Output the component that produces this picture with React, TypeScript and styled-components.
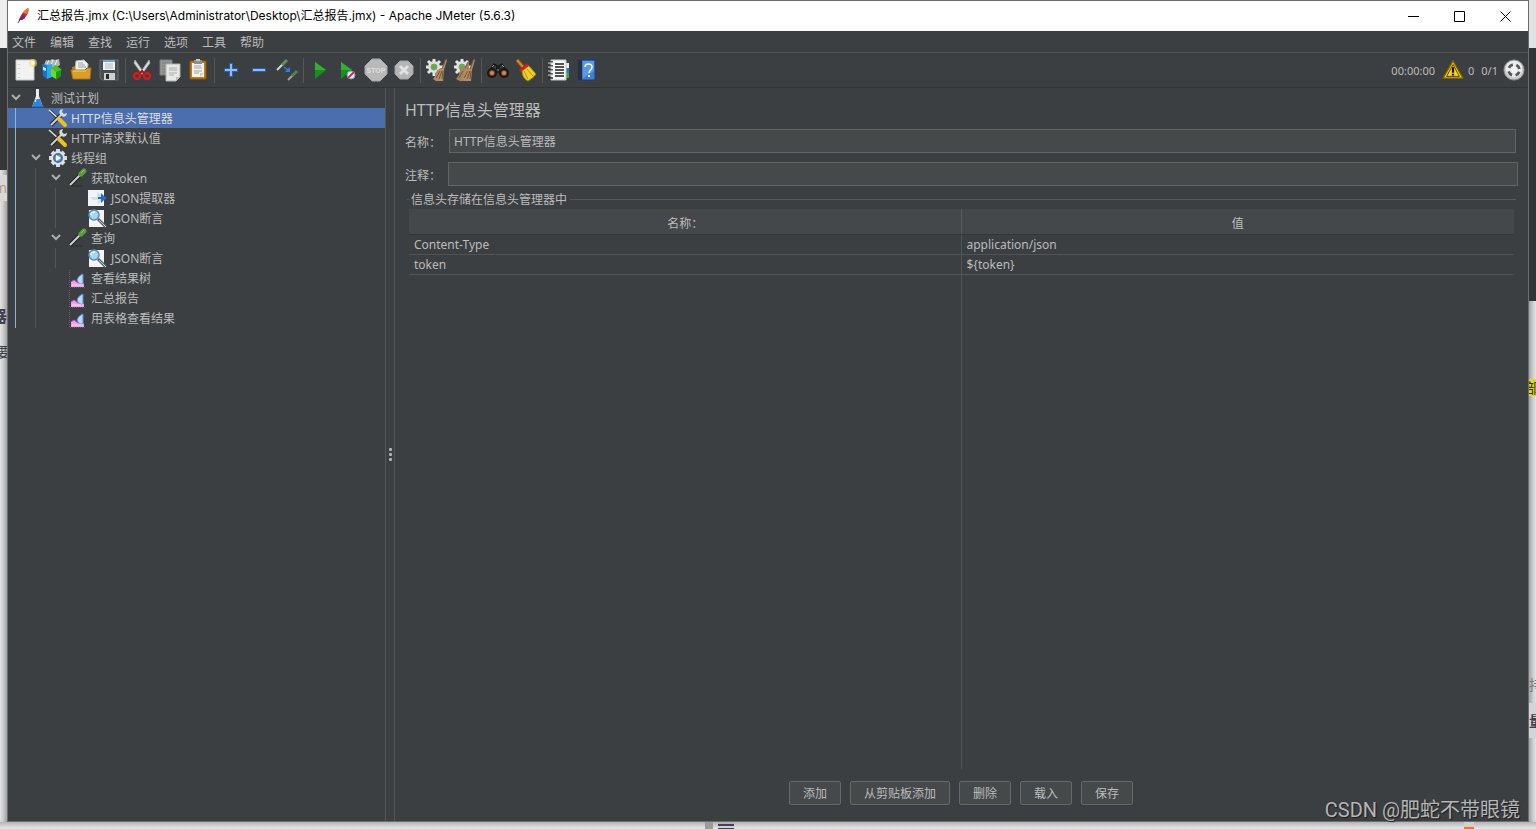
import React from "react";
import styled, { createGlobalStyle } from "styled-components";

const GlobalStyle = createGlobalStyle`
  *, *::before, *::after { box-sizing: border-box; }
  body { margin: 0; background: #e6e6e6; }
  body, button, input {
    font-family: "Noto Sans", "Noto Sans CJK SC", sans-serif;
    font-size: 12px;
  }
`;

const color = {
  bg: "#3c3f41",
  field: "#45494a",
  text: "#bbbbbb",
  line: "#515151",
  border: "#646464",
  select: "#4b6eaf",
};

/* ---------- desktop behind the window ---------- */

const Desktop = styled.div`
  position: relative;
  display: grid;
  grid-template-columns: 7px minmax(0, 1fr) 7px;
  grid-template-rows: 1fr 7px;
  min-height: 100vh;
  overflow: hidden;
  background: #e6e6e6;
`;

const Strip = styled.div<{ $side: "left" | "right" }>`
  display: flex;
  flex-direction: column;
  overflow: hidden;
  box-shadow: inset ${(p) => (p.$side === "left" ? "-6px" : "6px")} 0 6px -4px #8a8a8a;
`;

const Band = styled.div<{ $h: number; $bg?: string; $fg?: string; $align?: string; $size?: number; $bold?: boolean }>`
  display: flex;
  flex: none;
  align-items: center;
  justify-content: ${(p) => p.$align ?? "center"};
  height: ${(p) => p.$h}px;
  background: ${(p) => p.$bg ?? "transparent"};
  color: ${(p) => p.$fg ?? "#3f3f4a"};
  font-size: ${(p) => p.$size ?? 14}px;
  font-weight: ${(p) => (p.$bold ? 700 : 400)};
  line-height: 16px;
  white-space: nowrap;
  overflow: hidden;
`;

const BottomStrip = styled.div`
  grid-column: 1 / -1;
  display: flex;
  align-items: flex-start;
  background: linear-gradient(#b4b4b4, #e8e8e8);
  overflow: hidden;
`;

const Block = styled.div<{ $before: number; $w: number; $bg: string }>`
  flex: none;
  width: ${(p) => p.$w}px;
  height: 7px;
  margin-left: ${(p) => p.$before}px;
  background: ${(p) => p.$bg};
`;

const Watermark = styled.div`
  position: absolute;
  right: 16px;
  bottom: 5px;
  font: 20px/28px Roboto, "Noto Sans CJK SC", sans-serif;
  color: #b4b5b6;
  text-shadow: 1px 1px 1px #1c1d1e;
  pointer-events: none;
`;

/* ---------- window frame ---------- */

const Window = styled.div`
  display: flex;
  flex-direction: column;
  border: 1px solid #6e6c6e;
  background: ${color.bg};
  color: ${color.text};
`;

const TitleBar = styled.header`
  display: flex;
  align-items: center;
  height: 30px;
  padding-left: 7px;
  background: #fff;
  color: #000;
`;

const Title = styled.h1`
  flex: 1;
  margin: 0 0 0 5px;
  font-family: Inter, "Noto Sans CJK SC", sans-serif;
  font-size: 12px;
  font-weight: 400;
  line-height: 16px;
`;

const CaptionButton = styled.button`
  display: grid;
  place-items: center;
  width: 46px;
  height: 28px;
  padding: 0;
  border: 0;
  background: none;
`;

const MenuBar = styled.nav`
  display: flex;
  align-items: center;
  gap: 14px;
  height: 22px;
  padding-left: 4px;
  border-bottom: 1px solid ${color.line};
`;

const MenuButton = styled.button`
  padding: 2px 0 0;
  border: 0;
  background: none;
  color: ${color.text};
  line-height: 18px;
`;

const ToolBar = styled.div`
  display: flex;
  align-items: center;
  height: 35px;
  padding-left: 3px;
  border-bottom: 1px solid #323232;
`;

const ToolButton = styled.button`
  display: grid;
  place-items: center;
  width: 28px;
  height: 28px;
  padding: 0;
  border: 0;
  background: none;
`;

const Separator = styled.span`
  width: 1px;
  height: 25px;
  margin: 0 2px;
  background: #555759;
`;

const Status = styled.div`
  display: flex;
  align-items: center;
  gap: 7px;
  margin-left: auto;
  padding-right: 3px;
  font-size: 11px;
`;

const Counts = styled.span`
  display: flex;
  gap: 7px;
  margin: 0 -2px 0 -3px;
`;

const Main = styled.main`
  display: grid;
  grid-template-columns: 377px 10px minmax(0, 1fr);
  flex: 1;
`;

/* ---------- tree ---------- */

const Tree = styled.ul`
  margin: 0;
  padding: 0;
  list-style: none;
`;

const TreeRow = styled.li<{ $selected?: boolean }>`
  display: flex;
  height: 20px;
  background: ${(p) => (p.$selected ? color.select : "transparent")};
  color: ${(p) => (p.$selected ? "#dddddd" : color.text)};
`;

const Guide = styled.span<{ $color: string }>`
  width: 20px;
  padding-left: 7px;
  &::before {
    content: "";
    display: block;
    width: 1px;
    height: 20px;
    background: ${(p) => p.$color};
  }
`;

const Toggle = styled.button`
  display: block;
  width: 20px;
  height: 20px;
  padding: 0 5px 4px 0;
  border: 0;
  background: none;
  line-height: 0;
`;

const ToggleSpace = styled.span`
  width: 20px;
`;

const TreeIcon = styled.span`
  width: 20px;
  height: 20px;
`;

const TreeLabel = styled.span`
  padding-left: 3px;
  line-height: 22px;
`;

const Splitter = styled.div`
  display: flex;
  flex-direction: column;
  align-items: center;
  justify-content: center;
  gap: 2px;
  border: solid #555759;
  border-width: 0 1px;
`;

const Dot = styled.span`
  width: 3px;
  height: 3px;
  border-radius: 1px;
  background: #afb1b3;
`;

/* ---------- editor ---------- */

const Editor = styled.section`
  display: flex;
  flex-direction: column;
  padding: 11px 12px 16px 10px;
`;

const Heading = styled.h2`
  margin: 0 0 8px;
  font-size: 16px;
  font-weight: 400;
  line-height: 22px;
`;

const Field = styled.div<{ $wide?: boolean }>`
  display: flex;
  align-items: center;
  gap: ${(p) => (p.$wide ? 7 : 8)}px;
  margin: ${(p) => (p.$wide ? "9px -2px 3px 0" : "0")};
`;

const Label = styled.label`
  width: 36px;
  padding-top: 2px;
  white-space: nowrap;
`;

const TextBox = styled.input`
  flex: 1;
  min-width: 0;
  height: 24px;
  padding: 0 4px;
  border: 1px solid ${color.border};
  border-radius: 0;
  background: ${color.field};
  color: ${color.text};
`;

const Group = styled.fieldset`
  display: flex;
  flex-direction: column;
  flex: 1;
  min-width: 0;
  margin: 0 0 12px 2px;
  padding: 0 2px;
  border: solid #555759;
  border-width: 1px 0 0;
`;

const Legend = styled.legend`
  padding: 2px 3px 0 2px;
  line-height: 18px;
`;

const TableArea = styled.div`
  flex: 1;
  background: linear-gradient(#515455, #515455) 50% 0 / 1px 100% no-repeat;
`;

const Table = styled.table`
  width: 100%;
  border-spacing: 0;
  table-layout: fixed;
`;

const HeadRow = styled.tr`
  background: rgba(255, 255, 255, 0.05);
`;

const HeadCell = styled.th`
  height: 26px;
  padding: 2px 0 0;
  border-bottom: 1px solid #333638;
  font-weight: 400;
`;

const Cell = styled.td`
  height: 20px;
  padding: 0 5px;
  border-bottom: 1px solid #515455;
  line-height: 19px;
`;

const Actions = styled.div`
  display: flex;
  justify-content: center;
  gap: 9px;
  padding-left: 1px;
`;

const ActionButton = styled.button`
  height: 24px;
  padding: 2px 13px 0;
  border: 1px solid #66696a;
  border-radius: 2px;
  background: #45494a;
  color: ${color.text};
  box-shadow: 0 1px 0 #373a3b;
  line-height: 20px;
`;

/* ---------- icons ---------- */

const Svg = ({ s = 24, box = 24, children }: { s?: number; box?: number; children: React.ReactNode }) => (
  <svg width={s} height={s} viewBox={`0 0 ${box} ${box}`} fill="none" aria-hidden="true">
    {children}
  </svg>
);

const NewIcon = () => (
  <Svg>
    <path d="M3 2h18v20H3z" fill="#f2f2f0" stroke="#c9c9c6" />
    <path d="M6 6v1M6 10v1M6 15v1M6 19v1" stroke="#aaa" />
    <circle cx="20" cy="5" r="4" fill="#f3e16a" opacity=".6" />
    <circle cx="20" cy="5" r="2" fill="#fffbd0" />
  </Svg>
);

const TemplatesIcon = () => (
  <Svg>
    <path d="M3 7l2-5 3 1 3-2 3 1 4-1 1 6-7 4z" fill="#a9b5b8" />
    <path d="M6 6l2-4M10 7l2-5M14 7l2-5" stroke="#eef4f5" />
    <path d="M1 6l5 1v14l-4-3z" fill="#1675c9" />
    <path d="M6 7l5-1v13l-5 2z" fill="#2fa7ee" />
    <path d="M2 9l3 1v3l-3-1z" fill="#bfe3fa" />
    <path d="M10 11l5-2v12l-5-3z" fill="#6ddb2e" />
    <path d="M15 9l5 4v5l-5 4z" fill="#1f9a12" />
    <path d="M10 10l5-3 6 5-6 2z" fill="#48c21f" />
  </Svg>
);

const OpenIcon = () => (
  <Svg>
    <path d="M3 9l3-1 2 3h13v9H3z" fill="#b77a10" />
    <path d="M7 3l8-1 4 4-1 9H6z" fill="#f5f5f5" stroke="#bdbdbd" />
    <path d="M9 5h5M9 7h7M9 9h8" stroke="#9a9a9a" />
    <path d="M2 12h14l2-2h4l-1 11H4z" fill="#dc9d2b" stroke="#a86f0a" />
    <path d="M4 13h13" stroke="#f7cf7a" />
  </Svg>
);

const SaveIcon = () => (
  <Svg>
    <path d="M3 2h18v20H5l-2-2z" fill="#4a4c4d" stroke="#6b6d6e" />
    <path d="M6 2h12v10H6z" fill="#edf2f7" />
    <path d="M6 2h12v2H6z" fill="#6fa5de" />
    <path d="M8 6h8M8 8h8M8 10h8" stroke="#b2bac2" />
    <path d="M7 15h11v7H7z" fill="#cfd0d1" />
    <path d="M9 16h3v5H9z" fill="#2b2c2d" />
  </Svg>
);

const CutIcon = () => (
  <Svg>
    <path d="M5 2l9 13-2 1L4 5zM19 2l1 3-8 11-2-1z" fill="#dcdedf" stroke="#a1a3a4" strokeWidth="1" />
    <circle cx="7" cy="18" r="3" stroke="#d21d1d" strokeWidth="2.4" />
    <circle cx="17" cy="18" r="3" stroke="#d21d1d" strokeWidth="2.4" />
    <path d="M9 16l3-3 3 3" stroke="#b31212" strokeWidth="2" />
  </Svg>
);

const CopyIcon = () => (
  <Svg>
    <path d="M2 2h12v15H2z" fill="#969898" stroke="#7b7d7d" />
    <path d="M4 5h8M4 8h3M4 11h3M4 14h3" stroke="#777" />
    <path d="M8 6h14v13l-4 4H8z" fill="#e8e9e7" stroke="#b2b3b1" />
    <path d="M11 10h8M11 12h8M11 15h8M11 17h5" stroke="#a9aba9" />
    <path d="M18 23v-4h4z" fill="#bfc0be" />
  </Svg>
);

const PasteIcon = () => (
  <Svg>
    <rect x="4" y="3" width="16" height="18" rx="1" fill="#c17d11" stroke="#8f5902" />
    <path d="M6 5h12v14H6z" fill="#f2f2f0" />
    <path d="M8 2h8v4H8z" fill="#8d8f8d" />
    <path d="M10 1h4v2h-4z" fill="#c6c8c6" />
    <path d="M8 8h7M8 10h8M8 13h8M8 15h5" stroke="#a4a6a4" />
    <path d="M14 19v-4h4z" fill="#c9cbc9" />
  </Svg>
);

const PlusIcon = () => (
  <Svg>
    <path d="M12 5v14M5 12h14" stroke="#2b5fa8" strokeWidth="4" />
    <path d="M12 6v12M6 12h12" stroke="#8cbcf0" strokeWidth="2" />
  </Svg>
);

const MinusIcon = () => (
  <Svg>
    <path d="M5 12h14" stroke="#2b5fa8" strokeWidth="4" />
    <path d="M6 12h12" stroke="#8cbcf0" strokeWidth="2" />
  </Svg>
);

const ToggleIcon = () => (
  <Svg>
    <path d="M2 12l6-6" stroke="#d4d8d6" strokeWidth="2" />
    <path d="M7 7l5-5" stroke="#5c9254" strokeWidth="3" />
    <path d="M13 22l5-5" stroke="#9da39d" strokeWidth="2" />
    <path d="M17 18l5-5" stroke="#547f4e" strokeWidth="3" />
    <path d="M9 9l5 4" stroke="#2f7fe0" strokeWidth="1.5" />
    <path d="M15 9v5h-5z" fill="#2f7fe0" />
  </Svg>
);

const StartIcon = () => (
  <Svg>
    <path d="M7 4l11 8-11 9z" fill="#13911a" />
    <path d="M7 4l11 8H7z" fill="#38ad35" />
  </Svg>
);

const StartNoPausesIcon = () => (
  <Svg>
    <path d="M5 4l11 8-11 9z" fill="#13911a" />
    <path d="M5 4l11 8H5z" fill="#38ad35" />
    <circle cx="15" cy="17" r="4" fill="#dce9f7" stroke="#6fa1d6" />
    <path d="M12 20l6-6" stroke="#d52b2b" strokeWidth="2" />
  </Svg>
);

const StopIcon = () => (
  <Svg>
    <path d="M8 1h8l7 7v8l-7 7H8l-7-7V8z" fill="#b9b9b9" stroke="#a6a6a6" />
    <text x="12" y="15" textAnchor="middle" fontFamily="Liberation Sans, sans-serif" fontWeight="700" fontSize="7" fill="#dedede">
      STOP
    </text>
  </Svg>
);

const ShutdownIcon = () => (
  <Svg>
    <path d="M8 3h8l5 5v8l-5 5H8l-5-5V8z" fill="#b5b5b5" stroke="#a3a3a3" />
    <path d="M8 8l8 8M16 8l-8 8" stroke="#e2e2e2" strokeWidth="3" />
  </Svg>
);

const gearTeeth = "M9 1v17M1 9h17M3 3l12 12M15 3L3 15";

const ClearIcon = ({ all }: { all?: boolean }) => (
  <Svg>
    <path d={gearTeeth} stroke="#e4e6e6" strokeWidth="3" />
    <circle cx="9" cy="9" r="6" fill="#dfe1e1" />
    <circle cx="9" cy="9" r="3" fill="#5cb531" stroke="#8d928d" />
    {all && <path d="M16 2l-4 7-5 3-1 5-3 4 4 2h7l2-10z" fill="#a8835c" />}
    <path d="M21 1l-4 9-5 2-2 6-2 3 3 2h7l1-11 3-10z" fill="#b18c64" />
    <path d="M11 20l4-7M14 21l3-8M17 21l1-8M20 3l-3 8" stroke="#77563a" />
    {all && <path d="M6 20l4-7M15 4l-3 6" stroke="#77563a" />}
  </Svg>
);

const SearchIcon = () => (
  <Svg>
    <path d="M5 11l3-5 3 2v7M19 11l-3-5-3 2v7" fill="#3a3a3a" stroke="#161616" strokeWidth="1.5" />
    <circle cx="6" cy="15" r="4" fill="#6d4527" stroke="#171717" strokeWidth="2" />
    <circle cx="18" cy="15" r="4" fill="#6d4527" stroke="#171717" strokeWidth="2" />
    <circle cx="6" cy="15" r="2" fill="#d28a55" />
    <circle cx="18" cy="15" r="2" fill="#d28a55" />
    <path d="M6 9l2-2M16 7l2 2M11 12h2" stroke="#9a9a9a" />
  </Svg>
);

const BroomIcon = () => (
  <Svg>
    <path d="M3 2l7 8" stroke="#8b4f12" strokeWidth="4" />
    <path d="M3 2l6 7" stroke="#d58a32" strokeWidth="2" />
    <path d="M8 12l6-5 8 9c-2 3-5 5-8 7-4-2-6-6-6-11z" fill="#f0cf2a" stroke="#a98808" />
    <path d="M5 12l8-7 2 3-8 6z" fill="#c9261c" />
    <path d="M10 13l4 8M13 11l6 7" stroke="#b9950f" />
  </Svg>
);

const FunctionIcon = () => (
  <Svg>
    <path d="M18 5h4v5h-4z" fill="#e9e9e9" />
    <path d="M18 10h4v5h-4z" fill="#2f7dd1" />
    <path d="M18 15h4v5h-4z" fill="#39a939" />
    <path d="M4 2h15v20H4z" fill="#fafafa" stroke="#c4c4c4" />
    <path d="M8 6h9M8 9h9M8 12h9M8 15h9M8 18h9" stroke="#1d1d1d" strokeWidth="1.5" />
    <path d="M1 4h5M1 8h5M1 12h5M1 16h5M1 20h5" stroke="#2c2c2c" strokeWidth="1.5" />
    <path d="M1 5h5M1 9h5M1 13h5M1 17h5" stroke="#d9d9d9" />
  </Svg>
);

const HelpIcon = () => (
  <Svg>
    <path d="M3 2h17v20H3z" fill="#3b7fd9" stroke="#1d3f6d" />
    <path d="M3 2h4v20H3z" fill="#27303b" />
    <path d="M8 3h11v10L8 20z" fill="#5a99e8" />
    <path d="M10 9c0-4 7-4 7 0 0 3-3 3-3 6" stroke="#f2f7ff" strokeWidth="1.5" />
    <path d="M13 17h2v2h-2z" fill="#f2f7ff" />
  </Svg>
);

const WarningIcon = () => (
  <Svg s={22}>
    <path d="M12 2l11 19H1z" fill="#f6d013" stroke="#7a5d04" strokeWidth="1.5" strokeLinejoin="round" />
    <path d="M12 6l7 13H5z" fill="#f8d61c" stroke="#4b3b05" />
    <path d="M12 9v6M12 16v2" stroke="#161616" strokeWidth="2.4" />
  </Svg>
);

const RemoteIcon = () => (
  <Svg s={22}>
    <circle cx="12" cy="12" r="11" fill="#c9c9c9" stroke="#8d8d8d" />
    <circle cx="12" cy="11" r="9" fill="#ececec" />
    <circle cx="12" cy="12" r="6" stroke="#545759" strokeWidth="3" strokeDasharray="5.4 4" strokeDashoffset="-2" />
    <circle cx="12" cy="12" r="3" fill="#f4f4f4" />
  </Svg>
);

const FeatherIcon = () => (
  <Svg s={17} box={17}>
    <path d="M13 0c2 2-1 9-6 12l-3 0C5 8 9 2 13 0z" fill="#c9243f" />
    <path d="M13 0c1 2 0 4-1 6l-4-1c1-2 3-4 5-5z" fill="#ee7a28" />
    <path d="M4 12c1-2 3-5 5-6l1 4-3 2z" fill="#8e2161" />
    <path d="M3 15l3-5" stroke="#6a3154" />
  </Svg>
);

const Chevron = () => (
  <svg width="15" height="16" viewBox="0 0 15 16" fill="none" aria-hidden="true">
    <path d="M4 7l4 4 4-4" stroke="#adadad" strokeWidth="2" />
  </svg>
);

type IconName = "flask" | "tools" | "gear" | "dropper" | "extract" | "assert" | "chart";

const treeIcons: Record<IconName, React.ReactNode> = {
  flask: (
    <>
      <path d="M8 1h3v7l4 11H4l4-11z" fill="#dbe9f4" />
      <path d="M7 11h5l3 8H4z" fill="#2f86e0" />
      <path d="M9 2v7l-2 5" stroke="#fff" />
      <path d="M4 19h12" stroke="#1d5fae" />
    </>
  ),
  tools: (
    <>
      <path d="M2 3l10 9" stroke="#2f3133" strokeWidth="3" />
      <path d="M1 2l10 9" stroke="#e3e5e6" strokeWidth="1.5" />
      <path d="M3 17L14 6" stroke="#252728" strokeWidth="4" />
      <path d="M3 17L14 6" stroke="#c9cdcf" strokeWidth="2" />
      <path d="M12 2l3-1-1 3 2 2 3-1c0 3-3 5-6 3-2-2-2-4-1-6z" fill="#d5d9db" />
      <path d="M11 11l6 6" stroke="#f0bf19" strokeWidth="4" strokeLinecap="round" />
    </>
  ),
  gear: (
    <>
      <path d="M10 1v18M1 10h18M4 4l12 12M16 4L4 16" stroke="#d8dce0" strokeWidth="4" />
      <circle cx="10" cy="10" r="7" fill="#dfe3e7" />
      <circle cx="10" cy="10" r="4" fill="#7ba6d8" stroke="#456ea6" strokeWidth="2" />
      <path d="M8 7l5 3-5 3z" fill="#f5f9ff" />
    </>
  ),
  dropper: (
    <>
      <path d="M2 18h13" stroke="#2b2d2e" />
      <path d="M2 17L12 7" stroke="#1f2122" strokeWidth="4" />
      <path d="M2 17L12 7" stroke="#ccd1d0" strokeWidth="2" />
      <path d="M10 5l5 5" stroke="#334c2b" strokeWidth="2" />
      <path d="M13 6l3-3" stroke="#5c9b48" strokeWidth="5" strokeLinecap="round" />
      <path d="M13 5l3-3" stroke="#8cc276" />
    </>
  ),
  extract: (
    <>
      <path d="M0 2h16v16H0z" fill="#f2f3f5" />
      <path d="M2 9h7V4l9 6-8 6v-4H5z" fill="#d2dff0" />
      <path d="M10 9h3V5l5 5-5 5v-4h-3z" fill="#1670d8" />
    </>
  ),
  assert: (
    <>
      <path d="M1 2h15v17H1z" fill="#f4f4f4" />
      <path d="M10 11l8 8" stroke="#5c5f61" strokeWidth="3" />
      <path d="M11 12l7 7" stroke="#c8cbcd" />
      <circle cx="6" cy="7" r="5" fill="#a5d6f4" stroke="#5b8db5" strokeWidth="1.5" />
      <path d="M3 7c0-2 2-3 4-3" stroke="#e5f5ff" strokeWidth="1.5" />
    </>
  ),
  chart: (
    <>
      <path d="M1.5 2v17M2 19.5h16" stroke="#6b5f5f" strokeDasharray="1 1" />
      <path d="M3 19v-5l3-2 4 3 3-2 3 3v3z" fill="#f0a3e6" />
      <path d="M3 14l3-2 4 3 3-2 3 3" stroke="#d04fc0" />
      <path d="M9 12c1-3 3-5 6-6v10c-3 1-5-1-6-4z" fill="#bcd6f8" stroke="#5b86cc" />
      <path d="M4 17h11" stroke="#fcdcf7" />
    </>
  ),
};

/* ---------- data ---------- */

const toolGroups: [string, React.ReactNode][][] = [
  [["新建", <NewIcon />], ["模板", <TemplatesIcon />], ["打开", <OpenIcon />], ["保存", <SaveIcon />]],
  [["剪切", <CutIcon />], ["复制", <CopyIcon />], ["粘贴", <PasteIcon />]],
  [["展开", <PlusIcon />], ["折叠", <MinusIcon />], ["切换", <ToggleIcon />]],
  [["启动", <StartIcon />], ["不停顿开始", <StartNoPausesIcon />], ["停止", <StopIcon />], ["关闭", <ShutdownIcon />]],
  [["清除", <ClearIcon />], ["清除全部", <ClearIcon all />]],
  [["查找", <SearchIcon />], ["重置查找", <BroomIcon />]],
  [["函数助手", <FunctionIcon />], ["帮助", <HelpIcon />]],
];

const BLUE = "#7fb8f0";
const GRAY = "#535658";

type Node = { label: string; icon: IconName; guides: string[]; open?: boolean; selected?: boolean };

const nodes: Node[] = [
  { label: "测试计划", icon: "flask", guides: [], open: true },
  { label: "HTTP信息头管理器", icon: "tools", guides: [BLUE], selected: true },
  { label: "HTTP请求默认值", icon: "tools", guides: [BLUE] },
  { label: "线程组", icon: "gear", guides: [BLUE], open: true },
  { label: "获取token", icon: "dropper", guides: [BLUE, GRAY], open: true },
  { label: "JSON提取器", icon: "extract", guides: [BLUE, GRAY, GRAY] },
  { label: "JSON断言", icon: "assert", guides: [BLUE, GRAY, GRAY] },
  { label: "查询", icon: "dropper", guides: [BLUE, GRAY], open: true },
  { label: "JSON断言", icon: "assert", guides: [BLUE, GRAY, GRAY] },
  { label: "查看结果树", icon: "chart", guides: [BLUE, GRAY] },
  { label: "汇总报告", icon: "chart", guides: [BLUE, GRAY] },
  { label: "用表格查看结果", icon: "chart", guides: [BLUE, GRAY] },
];

const menus = ["文件", "编辑", "查找", "运行", "选项", "工具", "帮助"];
const headers = [
  ["Content-Type", "application/json"],
  ["token", "${token}"],
];
const actions = ["添加", "从剪贴板添加", "删除", "载入", "保存"];

export default function App() {
  return (
    <>
      <GlobalStyle />
      <Desktop>
        <Strip $side="left">
          <Band $h={48} $bg="#eeeeee" />
          <Band $h={122} $bg="#353638" />
          <Band $h={5} />
          <Band $h={26} $bg="#d8d8d8" $fg="#b99a7c" $align="flex-end">m</Band>
          <Band $h={103} />
          <Band $h={24} $size={16} $bold $align="flex-end">器</Band>
          <Band $h={12} />
          <Band $h={24}>要</Band>
        </Strip>
        <Window>
          <TitleBar>
            <FeatherIcon />
            <Title>汇总报告.jmx (C:\Users\Administrator\Desktop\汇总报告.jmx) - Apache JMeter (5.6.3)</Title>
            <CaptionButton aria-label="最小化">
              <Svg s={11} box={11}><path d="M0 5.5h11" stroke="#000" /></Svg>
            </CaptionButton>
            <CaptionButton aria-label="最大化">
              <Svg s={11} box={11}><path d="M.5.5h10v10H.5z" stroke="#000" /></Svg>
            </CaptionButton>
            <CaptionButton aria-label="关闭窗口">
              <Svg s={11} box={11}><path d="M.5.5l10 10M10.5.5l-10 10" stroke="#000" /></Svg>
            </CaptionButton>
          </TitleBar>
          <MenuBar>
            {menus.map((m) => <MenuButton key={m}>{m}</MenuButton>)}
          </MenuBar>
          <ToolBar>
            {toolGroups.map((group, i) => (
              <React.Fragment key={i}>
                {i > 0 && <Separator />}
                {group.map(([name, icon]) => (
                  <ToolButton key={name} aria-label={name}>{icon}</ToolButton>
                ))}
              </React.Fragment>
            ))}
            <Status>
              <span>00:00:00</span>
              <WarningIcon />
              <Counts><span>0</span><span>0/1</span></Counts>
              <RemoteIcon />
            </Status>
          </ToolBar>
          <Main>
            <Tree role="tree">
              {nodes.map((n, i) => (
                <TreeRow key={i} role="treeitem" aria-selected={!!n.selected} $selected={n.selected}>
                  {n.guides.map((g, j) => <Guide key={j} $color={g} />)}
                  {n.open ? <Toggle aria-label={`折叠 ${n.label}`}><Chevron /></Toggle> : <ToggleSpace />}
                  <TreeIcon><Svg s={20} box={20}>{treeIcons[n.icon]}</Svg></TreeIcon>
                  <TreeLabel>{n.label}</TreeLabel>
                </TreeRow>
              ))}
            </Tree>
            <Splitter role="separator"><Dot /><Dot /><Dot /></Splitter>
            <Editor>
              <Heading>HTTP信息头管理器</Heading>
              <Field>
                <Label htmlFor="name">名称：</Label>
                <TextBox id="name" defaultValue="HTTP信息头管理器" />
              </Field>
              <Field $wide>
                <Label htmlFor="comment">注释：</Label>
                <TextBox id="comment" />
              </Field>
              <Group>
                <Legend>信息头存储在信息头管理器中</Legend>
                <TableArea>
                  <Table>
                    <thead>
                      <HeadRow><HeadCell>名称：</HeadCell><HeadCell>值</HeadCell></HeadRow>
                    </thead>
                    <tbody>
                      {headers.map(([k, v]) => <tr key={k}><Cell>{k}</Cell><Cell>{v}</Cell></tr>)}
                    </tbody>
                  </Table>
                </TableArea>
              </Group>
              <Actions>
                {actions.map((a) => <ActionButton key={a}>{a}</ActionButton>)}
              </Actions>
            </Editor>
          </Main>
        </Window>
        <Strip $side="right">
          <Band $h={48} $bg="#e2e2e2" />
          <Band $h={253} $bg="#333436" />
          <Band $h={78} />
          <Band $h={17} $bg="#d9d92e" $fg="#333311">部</Band>
          <Band $h={281} />
          <Band $h={16} $fg="#77777f" $align="flex-start">持</Band>
          <Band $h={10} />
          <Band $h={35} $bg="#d3d4d8" $bold $align="flex-start">量</Band>
        </Strip>
        <BottomStrip>
          <Block $before={705} $w={8} $bg="#9c9c9c" />
          <Block $before={5} $w={16} $bg="linear-gradient(#b4b4b4 0 2px, #3f3f55 2px 4px, #d0d0d0 4px 6px, #3f3f55 6px)" />
          <Block $before={730} $w={10} $bg="linear-gradient(#d0d0d0 0 5px, #f0713c 5px)" />
        </BottomStrip>
        <Watermark>CSDN @肥蛇不带眼镜</Watermark>
      </Desktop>
    </>
  );
}
